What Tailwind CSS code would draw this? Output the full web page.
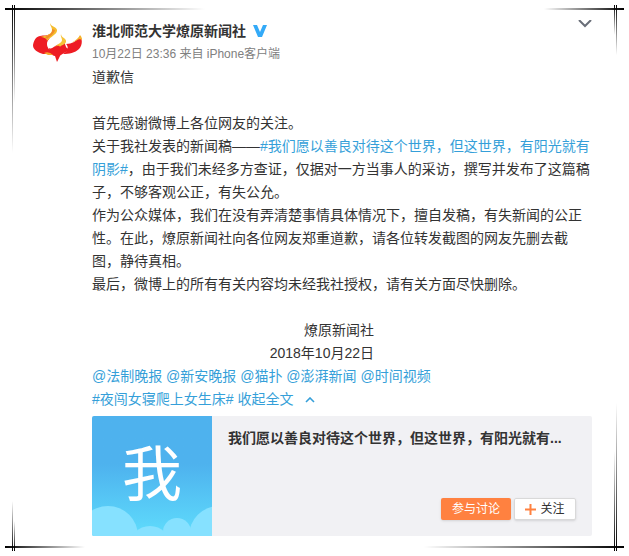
<!DOCTYPE html>
<html lang="zh-CN">

<head>
    <meta charset="UTF-8" />
    <meta name="viewport" content="width=device-width, initial-scale=1.0" />
    <script src="https://cdn.jsdelivr.net/npm/@tailwindcss/browser@4"></script>
    <title>淮北师范大学燎原新闻社</title>
</head>

<body class="relative min-h-screen bg-white text-[#333] text-sm font-['Liberation_Sans','Noto_Sans_CJK_SC',sans-serif]">
    <!-- Corner frame -->
    <div class="pointer-events-none absolute inset-0 overflow-hidden" aria-hidden="true">
        <div class="absolute left-[5px] top-2 h-0.5 w-[200px] bg-linear-to-r from-black to-transparent"></div>
        <div class="absolute left-3 top-[5px] h-[148px] w-px bg-linear-to-b from-black to-transparent"></div>
        <div class="absolute left-3.5 top-[5px] h-[98px] w-px bg-linear-to-b from-black to-transparent"></div>

        <div class="absolute right-[5px] top-2 h-0.5 w-20 bg-linear-to-l from-black to-transparent"></div>
        <div class="absolute right-3.5 top-[5px] h-[30px] w-px bg-linear-to-b from-black to-transparent"></div>
        <div class="absolute right-3 top-[5px] h-[50px] w-px bg-linear-to-b from-black to-transparent"></div>

        <div class="absolute left-[5px] bottom-2 h-0.5 w-20 bg-linear-to-r from-black to-transparent"></div>
        <div class="absolute left-3 bottom-[5px] h-[50px] w-px bg-linear-to-t from-black to-transparent"></div>
        <div class="absolute left-3.5 bottom-[5px] h-[30px] w-px bg-linear-to-t from-black to-transparent"></div>

        <div class="absolute right-[5px] bottom-2 h-0.5 w-[200px] bg-linear-to-l from-black to-transparent"></div>
        <div class="absolute right-3.5 bottom-[5px] h-[100px] w-px bg-linear-to-t from-black to-transparent"></div>
        <div class="absolute right-3 bottom-[5px] h-[148px] w-px bg-linear-to-t from-black to-transparent"></div>
    </div>

    <article class="relative flex gap-2.5 pt-5 pb-5 pl-8 pr-[37px]">
        <svg class="size-[50px] shrink-0" viewBox="0 0 50 50" aria-label="燎原新闻社">
            <path d="M18 14C20 18 15 19 15 24C15 28 18 31 22 32L20 35C16 33 12 35 8 33C4 31 1 29 1 25C2 21 3 17 8 16C12 15 15 16 18 14Z" fill="#ee1c23" />
            <path d="M18 3C19 7 26 7 25 11C24 15 18 17 15 21C15 18 11 17 8 17C14 16 20 14 20 10C20 7 18 6 18 3Z" fill="#f5bd2e" />
            <path d="M20 9C21 12 18 15 13 17L15 19C18 16 22 14 23 10Z" fill="#ef6a24" opacity=".6" />
            <path d="M32 22C34 25 33 28 37 29C34 33 29 34 28 36L25 42L23 36C20 36 17 32 17 28C20 30 22 26 25 25C28 24 30 24 32 22Z" fill="#ee1c23" />
            <path d="M29 14C29 18 35 18 34 22C33 25 29 25 28 27C27 25 25 26 23 27C25 24 30 23 30 20C30 18 28 16 29 14Z" fill="#f6c338" />
            <path d="M12 33Q17 31 21 35L16 35Z" fill="#f6a52c" />
            <path d="M48 16C51 20 50 26 47 29C43 33 37 34 31 34C36 31 37 27 34 24C40 24 45 21 48 16Z" fill="#ee1c23" />
            <path d="M48 15C50 17 50 19 50 20C47 18 45 21 39 23C44 20 47 18 48 15Z" fill="#f6b52c" />
        </svg>

        <div class="min-w-0 flex-1">
            <header class="flex items-start justify-between">
                <div>
                    <h1 class="flex items-center gap-[7px] font-bold leading-[22px]">
                        <a href="#">淮北师范大学燎原新闻社</a>
                        <svg class="h-3 w-3.5" viewBox="0 0 14 12" aria-label="认证">
                            <path d="M0 0H4L7 7L10 0H14L9 12H5Z" fill="#33aaf8" />
                        </svg>
                    </h1>
                    <p class="text-xs leading-6 text-[#808080]">10月22日 23:36 来自 iPhone客户端</p>
                </div>
                <button type="button" class="block" aria-label="更多">
                    <svg class="h-2 w-3.5" viewBox="0 0 14 8" fill="none" stroke="#696e78" stroke-width="2">
                        <path d="M1 0L7 6L13 0" />
                    </svg>
                </button>
            </header>

            <div class="leading-[23px]">
                <p>道歉信</p>
                <br>
                <p>首先感谢微博上各位网友的关注。</p>
                <p>关于我社发表的新闻稿——<a href="#" class="text-[#359fd9]">#我们愿以善良对待这个世界，但这世界，有阳光就有阴影#</a>，由于我们未经多方查证，仅据对一方当事人的采访，撰写并发布了这篇稿子，不够客观公正，有失公允。</p>
                <p>作为公众媒体，我们在没有弄清楚事情具体情况下，擅自发稿，有失新闻的公正性。在此，燎原新闻社向各位网友郑重道歉，请各位转发截图的网友先删去截图，静待真相。</p>
                <p>最后，微博上的所有有关内容均未经我社授权，请有关方面尽快删除。</p>
                <br>
                <div class="w-[282px] text-right">
                    <p>燎原新闻社</p>
                    <p>2018年10月22日</p>
                </div>
                <p class="text-[#359fd9]">
                    <a href="#">@法制晚报</a>
                    <a href="#">@新安晚报</a>
                    <a href="#">@猫扑</a>
                    <a href="#">@澎湃新闻</a>
                    <a href="#">@时间视频</a>
                </p>
                <p class="text-[#359fd9]">
                    <a href="#">#夜闯女寝爬上女生床#</a>
                    <a href="#">收起全文
                        <svg class="ml-2 inline h-1.5 w-2.5" viewBox="0 0 10 6" fill="none" stroke="currentColor" stroke-width="1.6">
                            <path d="M1 5L5 1L9 5" />
                        </svg>
                    </a>
                </p>
            </div>

            <!-- Topic card -->
            <section class="mt-[5px] flex overflow-hidden rounded-xs bg-[#f1f1f4]">
                <div class="relative flex size-[120px] shrink-0 items-center justify-center bg-linear-to-b from-[#4eb2ee] from-40% to-[#5fdcfc]">
                    <svg class="absolute inset-0 size-full" viewBox="0 0 120 120" fill="#86e1ff">
                        <circle cx="16" cy="120" r="30" />
                        <circle cx="58" cy="131" r="21" />
                        <circle cx="85" cy="116" r="14" />
                        <circle cx="127" cy="120" r="30" />
                    </svg>
                    <span class="relative text-[60px] leading-none text-white">我</span>
                </div>
                <div class="flex min-w-0 flex-1 flex-col justify-between p-4 pt-3">
                    <h2 class="truncate font-bold leading-5">我们愿以善良对待这个世界，但这世界，有阳光就有...</h2>
                    <div class="flex justify-end gap-[3px] text-xs">
                        <button type="button" class="h-[22px] w-[70px] rounded-xs bg-[#ff8140] text-white shadow-sm">参与讨论</button>
                        <button type="button" class="flex h-[22px] w-[62px] items-center justify-center gap-1 rounded-xs border border-[#d9d9d9] bg-white shadow-sm">
                            <svg class="size-[11px]" viewBox="0 0 11 11" stroke="#ff8140" stroke-width="2">
                                <path d="M5.5 0V11M0 5.5H11" />
                            </svg>
                            关注
                        </button>
                    </div>
                </div>
            </section>
        </div>
    </article>
</body>

</html>
